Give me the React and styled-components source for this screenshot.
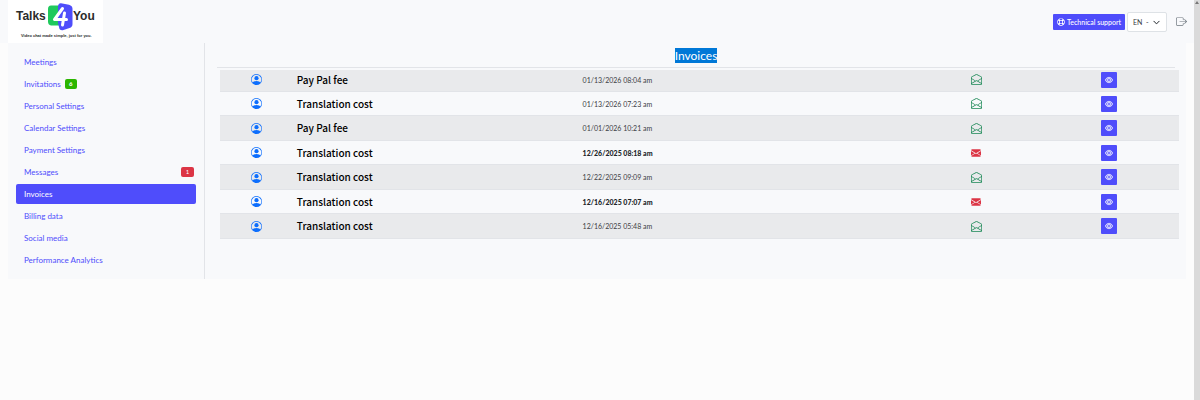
import React from "react";
import styled, { createGlobalStyle, css } from "styled-components";
import {
  BsPersonCircle,
  BsEnvelopeOpen,
  BsEnvelopeFill,
  BsEye,
  BsBoxArrowRight,
  BsChevronDown,
} from "react-icons/bs";
import { FaRegLifeRing } from "react-icons/fa";

const colors = {
  primary: "#4f4dfb",
  panel: "#f8f9fb",
  page: "#fcfcfc",
  stripe: "#e9eaec",
  line: "#e2e4e8",
  text: "#3c4045",
};

const GlobalStyle = createGlobalStyle`
  *, *::before, *::after { box-sizing: border-box; }
  body {
    margin: 0;
    background: ${colors.page};
    color: ${colors.text};
    font-family: Lato, "Liberation Sans", sans-serif;
    font-size: 8px;
    line-height: 12px;
    overflow: hidden;
  }
  button, select { font-family: inherit; }
`;

const Window = styled.div`
  display: flex;
  min-height: 100vh;
`;

const Page = styled.div`
  flex: 1;
  min-width: 0;
`;

const ScrollTrack = styled.div`
  width: 6px;
  padding-top: 1px;
  background: #dadada;
  display: flex;
  justify-content: center;
  align-items: flex-start;
`;

const Header = styled.header`
  display: flex;
  justify-content: space-between;
  align-items: center;
  height: 43px;
  padding: 0 7px 0 8px;
  background: ${colors.panel};
`;

const LogoLink = styled.a`
  display: block;
  width: 95px;
  height: 43px;
  background: #fff;
`;

const Actions = styled.div`
  display: flex;
  align-items: center;
  gap: 2px;
`;

const SupportButton = styled.button`
  display: flex;
  align-items: center;
  justify-content: center;
  gap: 2px;
  width: 72px;
  height: 16px;
  margin-top: 1px;
  padding: 0;
  border: 0;
  border-radius: 1px;
  background: ${colors.primary};
  color: #fff;
  font-size: 7px;
  font-weight: 500;
  line-height: 12px;
  white-space: nowrap;
`;

const LanguageField = styled.label`
  position: relative;
  display: block;

  svg {
    position: absolute;
    right: 7px;
    top: 7px;
    stroke: currentColor;
    stroke-width: 1;
    pointer-events: none;
  }
`;

const LanguageSelect = styled.select`
  appearance: none;
  display: block;
  width: 40px;
  height: 20px;
  padding: 0 0 0 5px;
  border: 1px solid #dee2e6;
  border-radius: 2px;
  background: #fff;
  color: #343a40;
  font-size: 7px;
`;

const LogoutButton = styled.button`
  display: flex;
  margin-left: 7px;
  padding: 0;
  border: 0;
  background: none;
  color: #6c757d;
`;

const Body = styled.div`
  display: flex;
  margin: 0 8px;
  min-height: 236px;
  background: ${colors.panel};
`;

const Sidebar = styled.nav`
  width: 197px;
  padding: 9px 8px;
  border-right: 1px solid ${colors.line};
`;

const MenuList = styled.ul`
  display: flex;
  flex-direction: column;
  gap: 2px;
  margin: 0;
  padding: 0;
  list-style: none;
`;

const MenuLink = styled.a`
  display: flex;
  align-items: center;
  gap: 4px;
  height: 20px;
  padding: 0 2px 0 8px;
  border-radius: 2px;
  color: ${colors.primary};
  text-decoration: none;
  ${({ $active }) =>
    $active &&
    css`
      background: ${colors.primary};
      color: #fff;
    `}
`;

const Badge = styled.span`
  display: flex;
  align-items: center;
  justify-content: center;
  width: ${({ $alert }) => ($alert ? 13 : 12)}px;
  height: 10px;
  margin-left: ${({ $alert }) => ($alert ? "auto" : "0")};
  border-radius: 2px;
  background: ${({ $alert }) => ($alert ? "#dc3545" : "#2bb600")};
  color: #fff;
  font-size: 6px;
  line-height: 10px;
  font-weight: ${({ $alert }) => ($alert ? 400 : 900)};
`;

const Main = styled.main`
  flex: 1;
  min-width: 0;
  padding: 5px 7px 0 12px;
`;

const Title = styled.h1`
  margin: 0 4px 2px 0;
  padding-bottom: 4px;
  border-bottom: 1px solid ${colors.line};
  text-align: center;
  font-size: 12px;
  line-height: 15px;
  font-weight: 400;
`;

const Selected = styled.span`
  display: inline-block;
  background: #0078d7;
  color: #fff;
`;

const InvoiceTable = styled.table`
  width: calc(100% - 3px);
  margin-left: 3px;
  table-layout: fixed;
  border-spacing: 0;
`;

const Column = styled.col`
  width: ${({ $share }) => $share}%;
`;

const Row = styled.tr`
  height: 24px;
  font-weight: ${({ $unread }) => ($unread ? 900 : 400)};
  color: ${({ $unread }) => ($unread ? "#212529" : colors.text)};

  &:nth-child(odd) {
    height: 25px;
    background: ${colors.stripe};
  }
  &:first-child {
    height: 22px;
  }
  &:first-child td {
    padding-bottom: 2px;
  }
`;

const Cell = styled.td`
  padding: 0 3px;
  border-bottom: 1px solid ${colors.line};
  vertical-align: middle;
  text-align: ${({ $center }) => ($center ? "center" : "left")};
  font-size: 7px;
  line-height: 12px;

  svg {
    display: block;
    margin: 0 auto;
  }
`;

const NameCell = styled(Cell)`
  color: #000;
  font-family: "Noto Sans CJK SC", "Noto Sans", sans-serif;
  font-size: 10px;
  font-weight: 500;
`;

const ViewButton = styled.button`
  display: block;
  width: 16px;
  height: 16px;
  margin: 0 auto;
  padding: 0;
  border: 0;
  border-radius: 1px;
  background: ${colors.primary};
  color: #e4e4ff;

  svg {
    stroke: currentColor;
    stroke-width: 1;
  }
`;

const menu = [
  { label: "Meetings" },
  { label: "Invitations", count: 6 },
  { label: "Personal Settings" },
  { label: "Calendar Settings" },
  { label: "Payment Settings" },
  { label: "Messages", count: 1, alert: true },
  { label: "Invoices", active: true },
  { label: "Billing data" },
  { label: "Social media" },
  { label: "Performance Analytics" },
];

const invoices = [
  { name: "Pay Pal fee", date: "01/13/2026 08:04 am" },
  { name: "Translation cost", date: "01/13/2026 07:23 am" },
  { name: "Pay Pal fee", date: "01/01/2026 10:21 am" },
  { name: "Translation cost", date: "12/26/2025 08:18 am", unread: true },
  { name: "Translation cost", date: "12/22/2025 09:09 am" },
  { name: "Translation cost", date: "12/16/2025 07:07 am", unread: true },
  { name: "Translation cost", date: "12/16/2025 05:48 am" },
];

function Logo() {
  return (
    <svg width="95" height="43" viewBox="0 0 95 43" role="img" aria-label="Talks 4 You">
      <g fontFamily="Liberation Sans, Arial, sans-serif" fontWeight="700" fill="#2b2b2b">
        <text x="8" y="20" fontSize="12">Talks</text>
        <text x="65" y="20" fontSize="12">You</text>
        <text x="13" y="37" fontSize="4">Video chat made simple, just for you.</text>
      </g>
      <path d="M43 5.500h11v20H43q-3-.5-3-4V9q0-3.500 3-3.500z" fill="#1fc95c" />
      <path d="M53 3.200l8 1.500q3.500 1 3.500 4V24q0 3-3 4l-6 2q-4 1-4.500-3l-1-4V7q0-4 3-3.800z" fill="#4f4dfb" />
      <path
        d="M54.500 8.500L46.500 19.500h12M56.500 13l-2 12"
        fill="none"
        stroke="#fff"
        strokeWidth="3"
        strokeLinecap="round"
        strokeLinejoin="round"
      />
    </svg>
  );
}

export default function App() {
  return (
    <>
      <GlobalStyle />
      <Window>
        <Page>
          <Header>
            <LogoLink href="#home">
              <Logo />
            </LogoLink>
            <Actions>
              <SupportButton type="button">
                <FaRegLifeRing size={8} />
                Technical support
              </SupportButton>
              <LanguageField>
                <LanguageSelect aria-label="Language" defaultValue="en">
                  <option value="en">{"EN\u00a0\u00a0-"}</option>
                </LanguageSelect>
                <BsChevronDown size={7} />
              </LanguageField>
              <LogoutButton type="button" aria-label="Log out">
                <BsBoxArrowRight size={11} />
              </LogoutButton>
            </Actions>
          </Header>
          <Body>
            <Sidebar>
              <MenuList>
                {menu.map(({ label, count, alert, active }) => (
                  <li key={label}>
                    <MenuLink href="#" $active={active}>
                      {label}
                      {count && <Badge $alert={alert}>{count}</Badge>}
                    </MenuLink>
                  </li>
                ))}
              </MenuList>
            </Sidebar>
            <Main>
              <Title>
                <Selected>Invoices</Selected>
              </Title>
              <InvoiceTable>
                <colgroup>
                  <Column $share={7.7} />
                  <Column $share={29.8} />
                  <Column $share={34.8} />
                  <Column $share={13.1} />
                  <Column $share={14.6} />
                </colgroup>
                <tbody>
                  {invoices.map(({ name, date, unread }) => (
                    <Row key={date} $unread={unread}>
                      <Cell $center>
                        <BsPersonCircle size={11} color="#0d6efd" />
                      </Cell>
                      <NameCell>{name}</NameCell>
                      <Cell>{date}</Cell>
                      <Cell $center>
                        {unread ? (
                          <BsEnvelopeFill size={10} color="#dc3545" />
                        ) : (
                          <BsEnvelopeOpen size={11} color="#198754" />
                        )}
                      </Cell>
                      <Cell $center>
                        <ViewButton type="button" aria-label={`View ${name} ${date}`}>
                          <BsEye size={8} />
                        </ViewButton>
                      </Cell>
                    </Row>
                  ))}
                </tbody>
              </InvoiceTable>
            </Main>
          </Body>
        </Page>
        <ScrollTrack aria-hidden="true">
          <svg width="4" height="3" viewBox="0 0 4 3">
            <path d="M0 3L2 0l2 3z" fill="#777" />
          </svg>
        </ScrollTrack>
      </Window>
    </>
  );
}
